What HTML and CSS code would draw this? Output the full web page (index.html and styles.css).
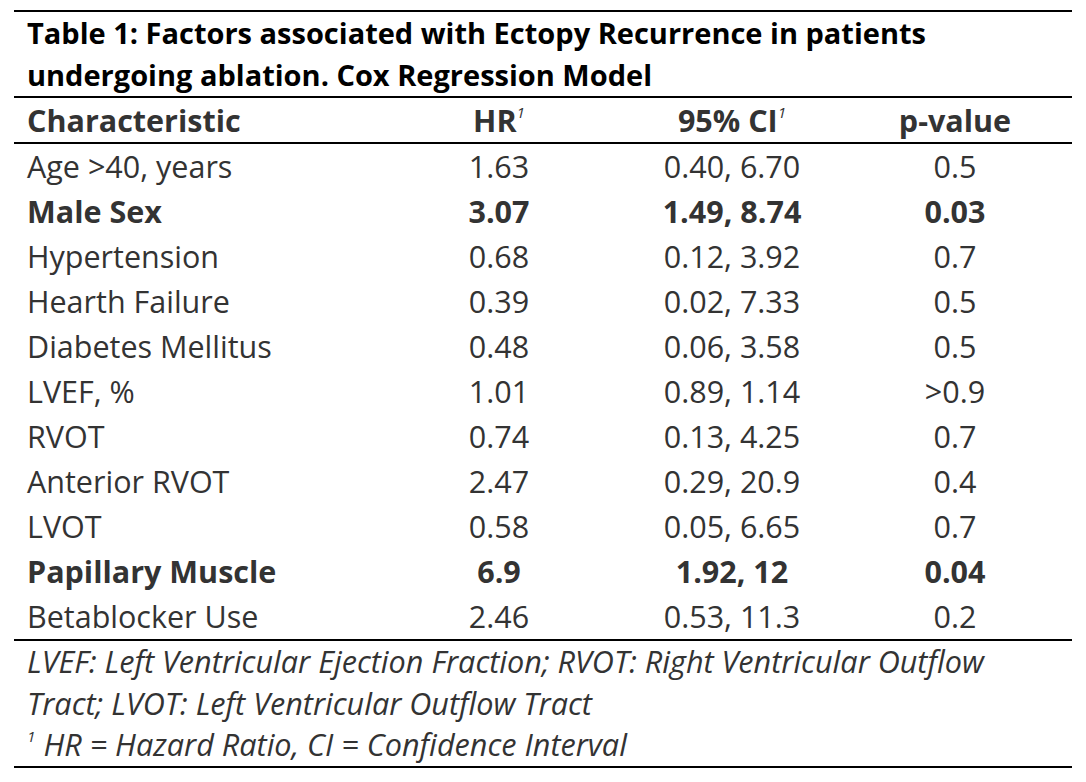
FILE: index.html
```html
<!DOCTYPE html>
<html lang="en">
<head>
<meta charset="utf-8">
<title>Table 1: Cox Regression Model</title>
<link rel="stylesheet" href="styles.css">
</head>
<body>
<div class="table">
  <div class="title">Table 1: Factors associated with Ectopy Recurrence in patients undergoing ablation. Cox Regression Model</div>
  <div class="row head">
    <div class="cell label">Characteristic</div>
    <div class="cell">HR<sup>1</sup></div>
    <div class="cell">95% CI<sup>1</sup></div>
    <div class="cell">p-value</div>
  </div>
  <div class="body">
    <div class="row"><div class="cell label">Age &gt;40, years</div><div class="cell">1.63</div><div class="cell">0.40, 6.70</div><div class="cell">0.5</div></div>
    <div class="row bold"><div class="cell label">Male Sex</div><div class="cell">3.07</div><div class="cell">1.49, 8.74</div><div class="cell">0.03</div></div>
    <div class="row"><div class="cell label">Hypertension</div><div class="cell">0.68</div><div class="cell">0.12, 3.92</div><div class="cell">0.7</div></div>
    <div class="row"><div class="cell label">Hearth Failure</div><div class="cell">0.39</div><div class="cell">0.02, 7.33</div><div class="cell">0.5</div></div>
    <div class="row"><div class="cell label">Diabetes Mellitus</div><div class="cell">0.48</div><div class="cell">0.06, 3.58</div><div class="cell">0.5</div></div>
    <div class="row"><div class="cell label">LVEF, %</div><div class="cell">1.01</div><div class="cell">0.89, 1.14</div><div class="cell">&gt;0.9</div></div>
    <div class="row"><div class="cell label">RVOT</div><div class="cell">0.74</div><div class="cell">0.13, 4.25</div><div class="cell">0.7</div></div>
    <div class="row"><div class="cell label">Anterior RVOT</div><div class="cell">2.47</div><div class="cell">0.29, 20.9</div><div class="cell">0.4</div></div>
    <div class="row"><div class="cell label">LVOT</div><div class="cell">0.58</div><div class="cell">0.05, 6.65</div><div class="cell">0.7</div></div>
    <div class="row bold"><div class="cell label">Papillary Muscle</div><div class="cell">6.9</div><div class="cell">1.92, 12</div><div class="cell">0.04</div></div>
    <div class="row"><div class="cell label">Betablocker Use</div><div class="cell">2.46</div><div class="cell">0.53, 11.3</div><div class="cell">0.2</div></div>
  </div>
  <div class="notes">
    <p class="note">LVEF: Left Ventricular Ejection Fraction; RVOT: Right Ventricular Outflow Tract; LVOT: Left Ventricular Outflow Tract</p>
    <p class="note"><sup>1</sup> HR = Hazard Ratio, CI = Confidence Interval</p>
  </div>
</div>
</body>
</html>
```
FILE: styles.css
```css
html, body {
  margin: 0;
  padding: 0;
  background: #ffffff;
}

body {
  font-family: "Open Sans", "Noto Sans", "Liberation Sans", sans-serif;
  color: #333333;
}

.table {
  width: 1058px;
  margin: 10px 14px 0 14px;
}

.title {
  border-top: 2px solid #000;
  border-bottom: 2px solid #000;
  padding: 0 40px 0 13px;
  font-size: 29px;
  font-weight: 700;
  line-height: 42px;
  color: #000;
}

.row {
  display: grid;
  grid-template-columns: 358px 254px 212px 234px;
  height: 45px;
  font-size: 30.5px;
  line-height: 45px;
}

.row.head {
  height: 44px;
  line-height: 44px;
  font-weight: 700;
  border-bottom: 2px solid #000;
}

.row.bold {
  font-weight: 700;
}

.cell {
  text-align: center;
  white-space: nowrap;
}

.cell.label {
  text-align: left;
  padding-left: 13px;
}

sup {
  font-size: 0.5em;
  font-style: italic;
  font-weight: 400;
  line-height: 0;
  vertical-align: 0.9em;
}

.notes {
  border-top: 2px solid #000;
  border-bottom: 2px solid #000;
  padding: 0 60px 0 13px;
}

.note {
  margin: 0;
  font-size: 30.6px;
  font-style: italic;
  line-height: 41.7px;
}

.note sup {
  font-style: italic;
}
```
